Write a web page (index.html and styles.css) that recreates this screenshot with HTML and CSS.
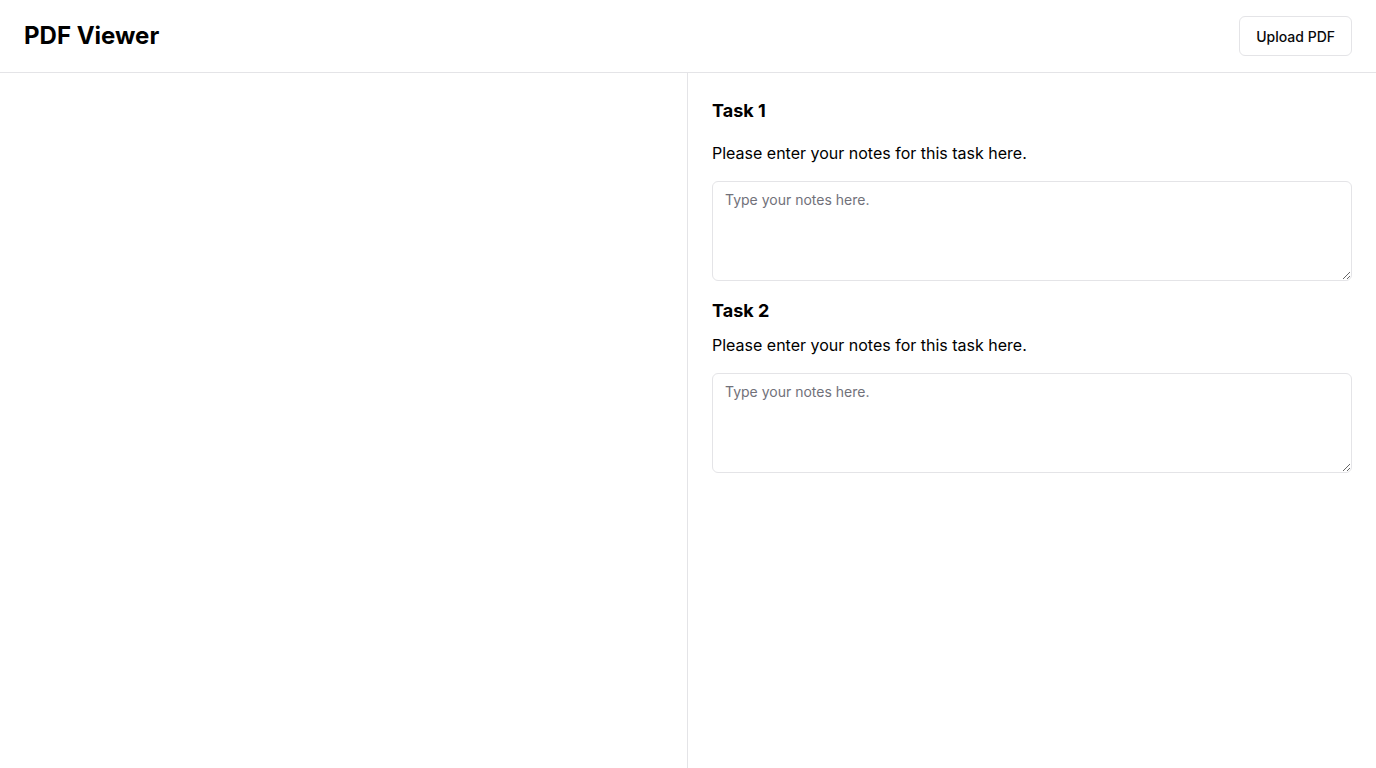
FILE: index.html
```html
<!DOCTYPE html>
<html lang="en">
<head>
<meta charset="utf-8">
<title>PDF Viewer</title>
<link rel="stylesheet" href="styles.css">
</head>
<body>
<div class="app">
  <header class="topbar">
    <h1 class="title">PDF Viewer</h1>
    <button class="upload-btn" type="button">Upload PDF</button>
  </header>
  <main class="main">
    <section class="viewer"></section>
    <section class="notes">
      <div class="task task-first">
        <h2 class="task-title">Task 1</h2>
        <p class="task-desc">Please enter your notes for this task here.</p>
        <textarea class="task-input" placeholder="Type your notes here."></textarea>
      </div>
      <div class="task task-second">
        <h2 class="task-title">Task 2</h2>
        <p class="task-desc">Please enter your notes for this task here.</p>
        <textarea class="task-input" placeholder="Type your notes here."></textarea>
      </div>
    </section>
  </main>
</div>
</body>
</html>
```

FILE: styles.css
```css
* { box-sizing: border-box; }
html, body {
  margin: 0;
  padding: 0;
  height: 100%;
  background: #ffffff;
  font-family: Inter, "Noto Sans", sans-serif;
  color: #09090b;
}
.app {
  display: flex;
  flex-direction: column;
  height: 100vh;
}
.topbar {
  display: flex;
  align-items: center;
  justify-content: space-between;
  height: 73px;
  padding: 0 24px;
  border-bottom: 1px solid #e4e4e7;
  flex-shrink: 0;
}
.title {
  margin: 0;
  font-size: 24px;
  line-height: 32px;
  font-weight: 700;
  color: #000;
}
.upload-btn {
  height: 40px;
  padding: 0 16px;
  border: 1px solid #e4e4e7;
  border-radius: 6px;
  background: #ffffff;
  font-family: Inter, "Noto Sans", sans-serif;
  font-size: 14px;
  font-weight: 500;
  color: #09090b;
  cursor: pointer;
}
.main {
  display: flex;
  flex: 1;
  min-height: 0;
}
.viewer {
  width: 50%;
  border-right: 1px solid #e4e4e7;
}
.notes {
  width: 50%;
  padding: 24px;
}
.task-title {
  margin: 0;
  font-size: 18px;
  line-height: 28px;
  font-weight: 700;
  color: #000;
}
.task-desc {
  margin: 0 0 16px;
  font-size: 16px;
  line-height: 24px;
  color: #000;
}
.task-first .task-title { margin-bottom: 16px; }
.task-second { margin-top: 16px; }
.task-second .task-title { margin-bottom: 8px; }
.task-input {
  display: block;
  width: 100%;
  height: 100px;
  padding: 8px 12px;
  border: 1px solid #e4e4e7;
  border-radius: 6px;
  font-family: Inter, "Noto Sans", sans-serif;
  font-size: 14px;
  line-height: 20px;
  color: #09090b;
  background: #fff;
  outline: none;
}
.task-input::placeholder { color: #71717a; }
```
